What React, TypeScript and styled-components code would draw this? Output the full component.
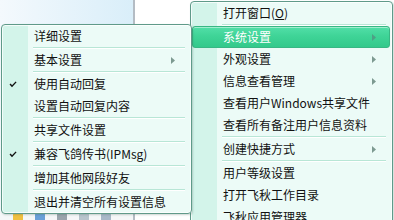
import React from "react";
import styled, { createGlobalStyle } from "styled-components";

const GlobalStyle = createGlobalStyle`
  html, body {
    margin: 0;
    padding: 0;
    overflow: hidden;
    background: #ffffff;
  }
  body {
    font-family: "Microsoft YaHei", "Noto Sans CJK SC", "Noto Sans", sans-serif;
  }
`;

const Desktop = styled.div`
  position: relative;
  width: 394px;
  height: 220px;
  display: flex;
  overflow: hidden;
`;

const SidePane = styled.div`
  width: 133px;
  height: 100%;
  display: flex;
  flex-direction: column;
  background: linear-gradient(to right, #f4f9fd, #d9eef9);
`;

const IconBar = styled.div`
  margin-top: auto;
  height: 9px;
  display: flex;
  gap: 10px;
  padding-left: 12px;
  background: #f5f7f8;
`;

const Divider = styled.div`
  width: 2px;
  background: #b4bcc4;
`;

const MainPane = styled.div`
  flex: 1;
  background: #ffffff;
`;

const MenuPanel = styled.div<{ $x: number; $y: number; $w: number }>`
  position: absolute;
  left: ${(p) => p.$x}px;
  top: ${(p) => p.$y}px;
  width: ${(p) => p.$w}px;
  box-sizing: border-box;
  border: 1px solid #5f9a89;
  border-radius: 4px;
  padding: 0;
  background: linear-gradient(to right, #d3f4ea 0, #d3f4ea 26px, #ecfbf7 26px);
  box-shadow: inset 0 0 0 1px rgba(255, 255, 255, 0.75), 1px 1px 2px rgba(60, 90, 80, 0.25);
`;

const Item = styled.div<{ $active?: boolean }>`
  height: 22px;
  display: flex;
  align-items: center;
  box-sizing: border-box;
  margin: 0 2px 0 1px;
  border-radius: 3px;
  font-size: 12px;
  color: ${(p) => (p.$active ? "#ffffff" : "#111111")};
  background: ${(p) =>
    p.$active ? "linear-gradient(to bottom, #52dfa8 0%, #3fd497 45%, #33c98b 100%)" : "transparent"};
  border: 1px solid ${(p) => (p.$active ? "#38b784" : "transparent")};
  box-shadow: ${(p) => (p.$active ? "inset 0 1px 0 rgba(255,255,255,0.45)" : "none")};
`;

const CheckCell = styled.div`
  width: 30px;
  height: 100%;
  flex: none;
  display: flex;
  align-items: center;
  padding-left: 5px;
  box-sizing: border-box;
`;

const Label = styled.div`
  flex: 1;
  white-space: nowrap;
  line-height: 20px;
`;

const Key = styled.span`
  text-decoration: underline;
`;

const ArrowCell = styled.div`
  width: 12px;
  flex: none;
  display: flex;
  align-items: center;
  padding-right: 5px;
`;

const Separator = styled.div`
  height: 2px;
  margin: 0 6px 0 31px;
  border-top: 1px solid #b8e6d6;
  box-sizing: border-box;
  background: #ffffff;
`;

const Check = () => (
  <svg width="8" height="7" viewBox="0 0 8 7">
    <path d="M0.5 3.6 L1.8 2.6 L3 4.2 L6.6 0.4 L7.6 1.3 L3 6.3 Z" fill="#111" />
  </svg>
);

const Arrow = ({ color }: { color: string }) => (
  <svg width="4" height="7" viewBox="0 0 4 7">
    <path d="M0 0 L4 3.5 L0 7 Z" fill={color} />
  </svg>
);

type Entry = { label: React.ReactNode; checked?: boolean; sub?: boolean; active?: boolean } | "sep";

const subEntries: Entry[] = [
  { label: "详细设置" },
  "sep",
  { label: "基本设置", sub: true },
  "sep",
  { label: "使用自动回复", checked: true },
  { label: "设置自动回复内容" },
  "sep",
  { label: "共享文件设置" },
  "sep",
  { label: "兼容飞鸽传书(IPMsg)", checked: true },
  "sep",
  { label: "增加其他网段好友" },
  "sep",
  { label: "退出并清空所有设置信息" },
];

const mainEntries: Entry[] = [
  {
    label: (
      <>
        打开窗口(<Key>O</Key>)
      </>
    ),
  },
  "sep",
  { label: "系统设置", sub: true, active: true },
  { label: "外观设置", sub: true },
  { label: "信息查看管理", sub: true },
  { label: "查看用户Windows共享文件" },
  { label: "查看所有备注用户信息资料" },
  "sep",
  { label: "创建快捷方式", sub: true },
  "sep",
  { label: "用户等级设置" },
  { label: "打开飞秋工作目录" },
  { label: "飞秋应用管理器" },
  { label: "退出" },
];

const MenuList = ({ entries }: { entries: Entry[] }) => (
  <>
    {entries.map((e, i) =>
      e === "sep" ? (
        <Separator key={i} />
      ) : (
        <Item key={i} $active={e.active}>
          <CheckCell>{e.checked && <Check />}</CheckCell>
          <Label>{e.label}</Label>
          <ArrowCell>{e.sub && <Arrow color={e.active ? "#4f9f85" : "#7d9a91"} />}</ArrowCell>
        </Item>
      )
    )}
  </>
);

const TrayIcon = ({ fill }: { fill: string }) => (
  <svg width="12" height="12" viewBox="0 0 12 12">
    <rect x="1" y="1" width="10" height="10" rx="3" fill={fill} />
  </svg>
);

export default function App() {
  return (
    <>
      <GlobalStyle />
      <Desktop>
        <SidePane>
          <IconBar>
            <TrayIcon fill="#f0c040" />
            <TrayIcon fill="#6aa0d8" />
            <TrayIcon fill="#9aa4ac" />
            <TrayIcon fill="#b8c4cc" />
            <TrayIcon fill="#a8b8c8" />
          </IconBar>
        </SidePane>
        <Divider />
        <MainPane />
        <MenuPanel $x={190} $y={1} $w={203}>
          <MenuList entries={mainEntries} />
        </MenuPanel>
        <MenuPanel $x={1} $y={24} $w={191}>
          <MenuList entries={subEntries} />
        </MenuPanel>
      </Desktop>
    </>
  );
}
